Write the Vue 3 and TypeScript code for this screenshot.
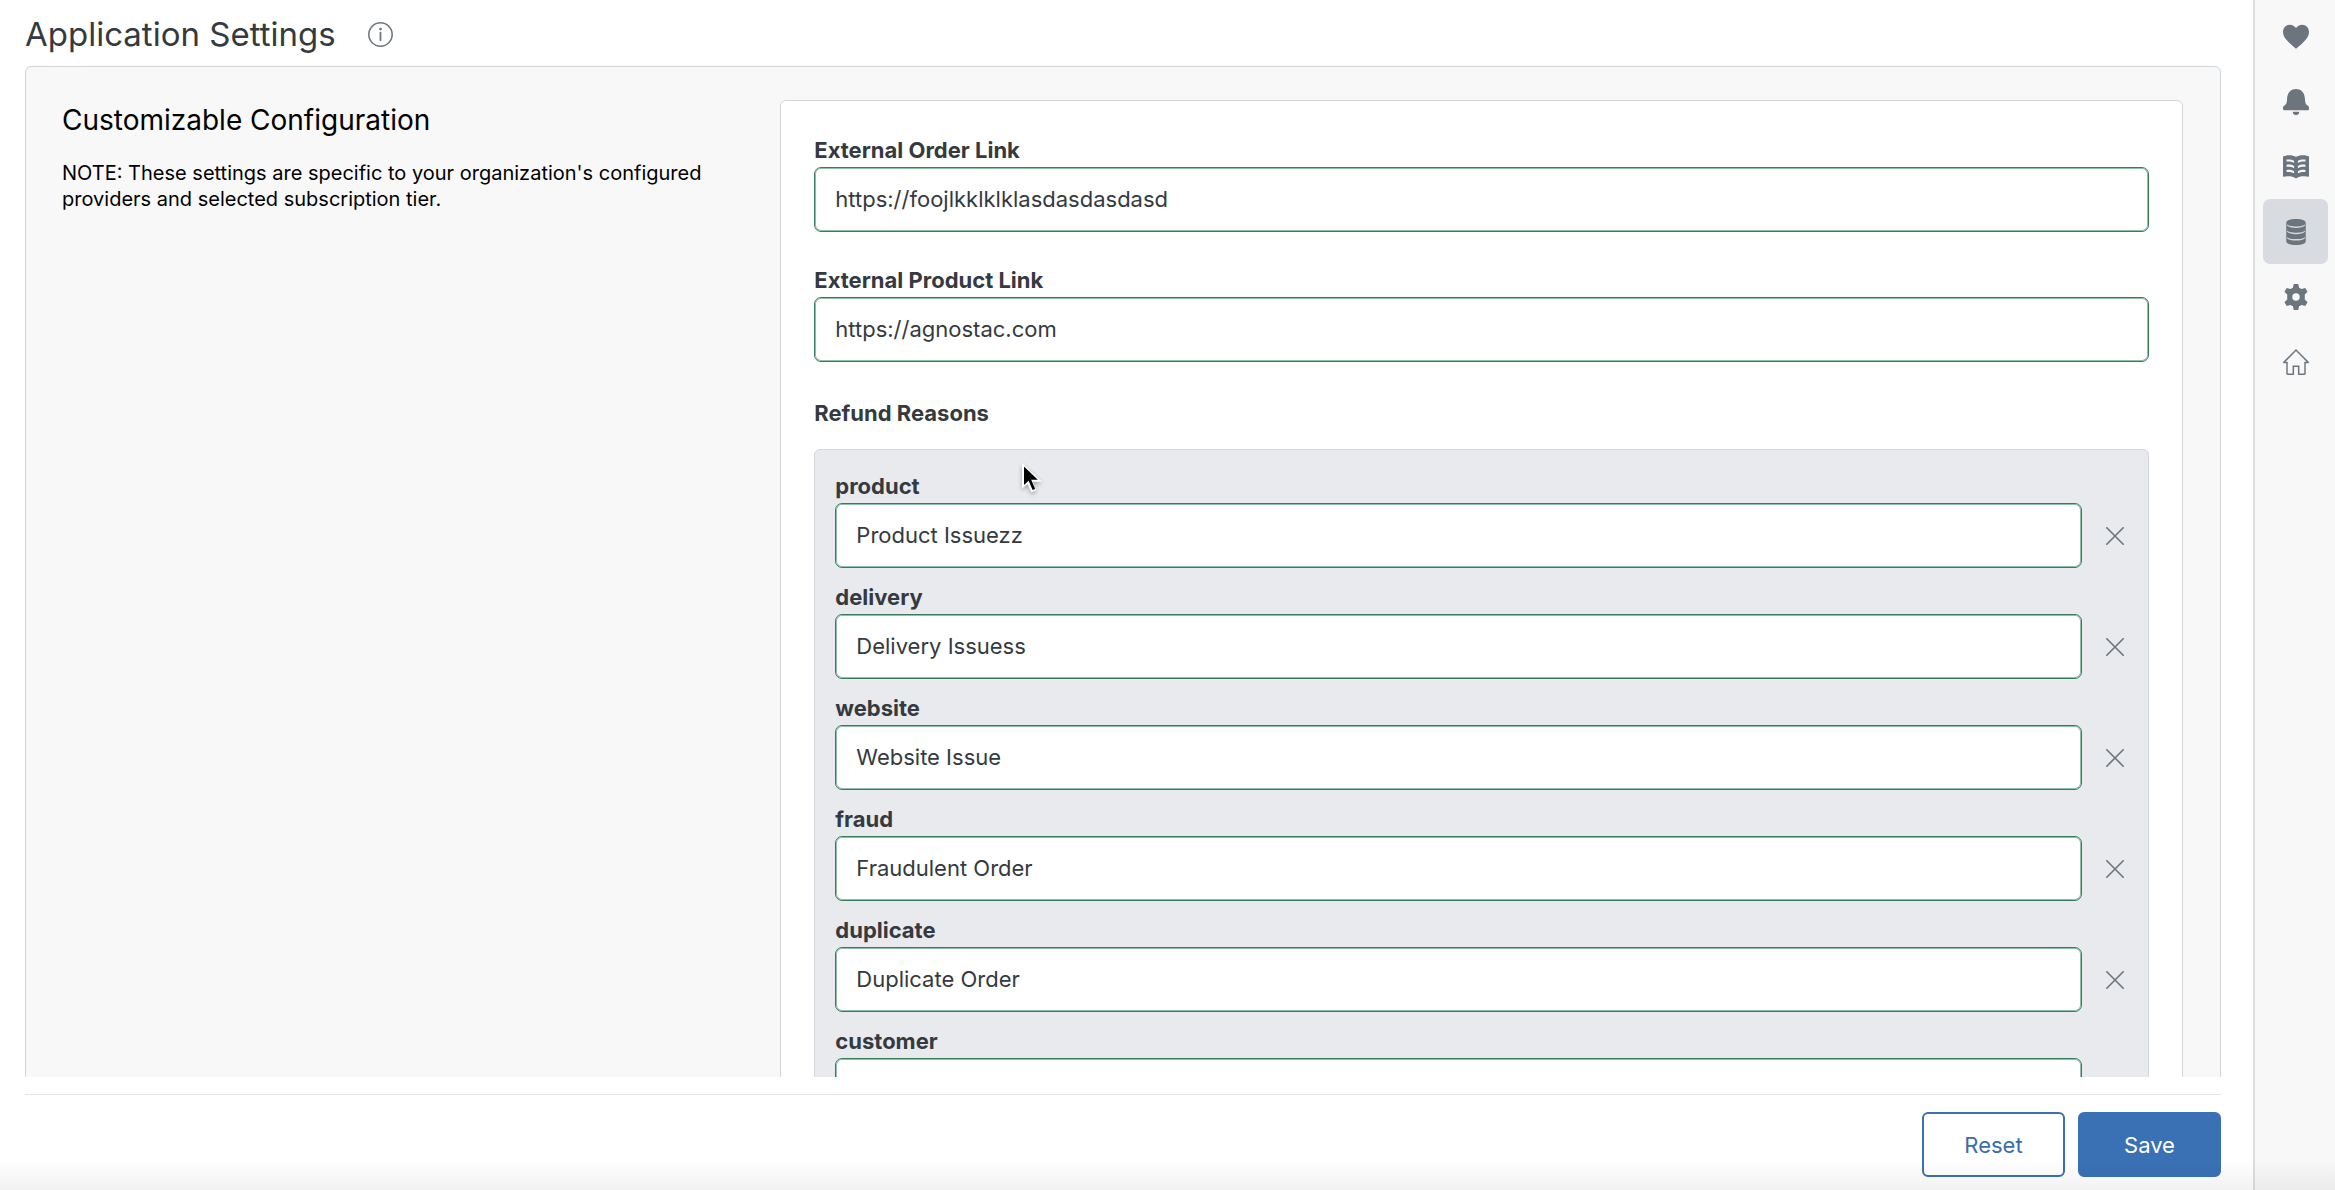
<script setup lang="ts">
import { reactive } from 'vue'

interface Field {
  key: string
  label: string
  value: string
}

interface NavItem {
  name: string
  paths: string[]
  active?: boolean
}

const links = reactive<Field[]>([
  { key: 'order-link', label: 'External Order Link', value: 'https://foojlkklklklasdasdasdasd' },
  { key: 'product-link', label: 'External Product Link', value: 'https://agnostac.com' },
])

const reasons = reactive<Field[]>([
  { key: 'product', label: 'product', value: 'Product Issuezz' },
  { key: 'delivery', label: 'delivery', value: 'Delivery Issuess' },
  { key: 'website', label: 'website', value: 'Website Issue' },
  { key: 'fraud', label: 'fraud', value: 'Fraudulent Order' },
  { key: 'duplicate', label: 'duplicate', value: 'Duplicate Order' },
  { key: 'customer', label: 'customer', value: '' },
])

const nav: NavItem[] = [
  {
    name: 'Favorites',
    paths: ['M8 15.200C3.500 11.500 0 8.500 0 4.900 0 2.200 1.900.4 4.200.4c1.600 0 3 .8 3.800 2C8.800 1.200 10.200.4 11.800.4 14.100.4 16 2.200 16 4.900c0 3.600-3.500 6.600-8 10.300z'],
  },
  {
    name: 'Notifications',
    paths: [
      'M8 0C4.3 0 2.6 3 2.5 6.2c-.1 2-.3 3.2-1.6 4C.2 10.600 0 11 0 11.700V12.300c0 .5.3.7.7.7h14.600c.4 0 .7-.2.7-.7V11.700c0-.7-.2-1.100-.9-1.500-1.300-.8-1.500-2-1.600-4C13.400 3 11.700 0 8 0z',
      'M6 14h4a2 2 0 0 1-4 0z',
    ],
  },
  {
    name: 'Catalog',
    paths: [
      'M0 1.500C2.500.4 5.800.4 8 1.700 10.200.4 13.500.4 16 1.500V14c-2.500-.5-6-.5-8 1-2-1.500-5.500-1.500-8-1zM2.200 3.400v1.300c1.500-.2 3-.1 4.600.8V4.200C5.300 3.300 3.800 3.200 2.200 3.400zm0 3.200v1.300c1.500-.2 3-.1 4.600.8V7.400C5.300 6.500 3.800 6.400 2.200 6.600zm0 3.200v1.300c1.500-.2 3-.1 4.600.8v-1.300C5.300 9.700 3.800 9.600 2.200 9.800zM13.800 3.400c-1.600-.2-3.100-.1-4.600.8v1.300c1.600-.9 3.100-1 4.600-.8zm0 3.200c-1.600-.2-3.100-.1-4.600.8v1.300c1.600-.9 3.100-1 4.600-.8zm0 3.200c-1.600-.2-3.100-.1-4.600.8v1.300c1.600-.9 3.100-1 4.600-.8z',
    ],
  },
  {
    name: 'Data',
    active: true,
    paths: [
      'M2 2.300C2 .9 4.500 0 8 0s6 .9 6 2.300v11.400C14 15.100 11.500 16 8 16s-6-.9-6-2.300zM2.500 3.200V4C4 6 12 6 13.500 4v-.8C12.200 5 3.800 5 2.500 3.200zm0 3.900v.8c1.500 2 9.500 2 11 0v-.8c-1.300 1.800-9.700 1.800-11 0zm0 3.900v.8c1.500 2 9.500 2 11 0V11c-1.300 1.800-9.700 1.800-11 0z',
    ],
  },
  {
    name: 'Settings',
    paths: [
      'M6.600 0h2.800l.5 2.300 1.500.8 2.300-.7 1.400 2.400-1.700 1.700v3l1.700 1.700-1.400 2.400-2.300-.7-1.500.8L9.400 16H6.600l-.5-2.300-1.500-.8-2.300.7L.9 11.200l1.700-1.700v-3L.9 4.800l1.400-2.400 2.300.7 1.500-.8zM8 5.700a2.300 2.300 0 1 0 0 4.600 2.300 2.300 0 0 0 0-4.600z',
    ],
  },
  {
    name: 'Home',
    paths: [
      'M8 0L16 8 15.700 8.800H14V15a1 1 0 0 1-1 1H9.200V11H6.800v5H3a1 1 0 0 1-1-1V8.800H.3L0 8zM8 1.300L1.500 7.900H2.900V15.100H5.900V10.100h4.200v5h3V7.900h1.400z',
    ],
  },
]

function clearReason(reason: Field) {
  reason.value = ''
}
</script>

<template>
  <div class="app">
    <main class="main">
      <header class="title-bar">
        <h1>Application Settings</h1>
        <button class="info" type="button" aria-label="About these settings">
          <svg viewBox="0 0 24 24" fill="none" stroke="currentColor">
            <circle cx="12" cy="12" r="11.200" stroke-width="1.500" />
            <path d="M12 10.300v7.200" stroke-width="1.700" stroke-linecap="round" />
            <circle cx="12" cy="6.800" r="1.300" fill="currentColor" stroke="none" />
          </svg>
        </button>
      </header>

      <div class="scroller">
        <section class="panel">
          <div class="intro">
            <h2>Customizable Configuration</h2>
            <p>NOTE: These settings are specific to your organization's configured providers and selected subscription tier.</p>
          </div>

          <form id="settings" class="card" @submit.prevent>
            <div v-for="link in links" :key="link.key" class="field">
              <label :for="link.key">{{ link.label }}</label>
              <input :id="link.key" v-model="link.value" type="text" />
            </div>

            <h3>Refund Reasons</h3>
            <div class="group">
              <div v-for="reason in reasons" :key="reason.key" class="reason">
                <label :for="reason.key">{{ reason.label }}</label>
                <div class="row">
                  <input :id="reason.key" v-model="reason.value" type="text" />
                  <button class="clear" type="button" :aria-label="'Clear ' + reason.label" @click="clearReason(reason)">
                    <svg viewBox="0 0 18 18" fill="none" stroke="currentColor" stroke-width="1.600" stroke-linecap="round">
                      <path d="M.8.8l16.400 16.400M17.200.8L.8 17.200" />
                    </svg>
                  </button>
                </div>
              </div>
              <svg class="pointer" viewBox="0 0 20 30" aria-hidden="true">
                <path d="M0 0v25.500l5.500-4.500 3.700 8.300 5.200-2-3.700-8.500H20z" fill="#fff" />
                <path d="M2 3.500v18.500l4.600-4.300 4 9.400 2.600-1-4-9.300h6.600z" fill="#000" />
              </svg>
            </div>
          </form>
        </section>
      </div>

      <footer class="actions">
        <button class="btn" type="reset" form="settings">Reset</button>
        <button class="btn primary" type="submit" form="settings">Save</button>
      </footer>
    </main>

    <nav class="rail">
      <button v-for="item in nav" :key="item.name" type="button" :class="{ active: item.active }" :aria-label="item.name">
        <svg viewBox="0 0 16 16" fill="currentColor" fill-rule="evenodd">
          <path v-for="d in item.paths" :key="d" :d="d" />
        </svg>
      </button>
    </nav>
    <div class="shade"></div>
  </div>
</template>

<style>
body {
  margin: 0;
}
</style>

<style scoped>
* {
  box-sizing: border-box;
}

.app {
  position: relative;
  display: flex;
  height: 100vh;
  overflow: hidden;
  background: #fff;
  color: #343a40;
  font: 22px/34px Inter, "Liberation Sans", sans-serif;
}

h1,
h2,
h3,
p {
  margin: 0;
  font-weight: 400;
}

button,
input {
  font: inherit;
  color: inherit;
}

button {
  display: flex;
  align-items: center;
  justify-content: center;
  padding: 0;
  border: 0;
  background: none;
}

.main {
  flex: 1;
  min-width: 0;
  display: flex;
  flex-direction: column;
  padding: 0 32px 0 25px;
}

.title-bar {
  flex: none;
  display: flex;
  align-items: center;
  gap: 32px;
  height: 66px;
  padding-top: 2px;
}

h1 {
  font-size: 33px;
  line-height: 64px;
}

.info {
  color: #6c757d;
}

.info svg {
  width: 25px;
  height: 25px;
}

.scroller {
  flex: 1;
  min-height: 0;
  overflow: auto;
  scrollbar-width: none;
}

.panel {
  display: grid;
  grid-template-columns: 1fr 2fr;
  gap: 17px;
  padding: 33px 37px 33px 36px;
  border: 1px solid #d0d5da;
  border-radius: 6px;
  background: #f8f8f8;
}

.intro {
  color: #000;
}

h2 {
  font-size: 28px;
  line-height: 40px;
}

.intro p {
  margin-top: 20px;
  font-size: 20px;
  line-height: 26px;
}

.card {
  padding: 32px 33px;
  border: 1px solid #d0d5da;
  border-radius: 6px;
  background: #fff;
}

label,
h3 {
  display: block;
  font-size: 22px;
  font-weight: 700;
  line-height: 34px;
}

input {
  display: block;
  width: 100%;
  height: 65px;
  padding: 0 20px 1px;
  border: 1px solid #347f5a;
  border-radius: 7px;
  outline: 0;
  background: #fff;
  box-shadow: inset 0 0 0 1px #8fbfa6;
}

.field {
  margin-bottom: 31px;
}

h3 {
  margin: 34px 0 19px;
}

.group {
  position: relative;
  padding: 19px 0 20px 20px;
  border: 1px solid #d3d7db;
  border-radius: 6px;
  background: #e9eaee;
}

.reason + .reason {
  margin-top: 12px;
}

.row {
  display: flex;
}

.row input {
  flex: 1;
  min-width: 0;
}

.clear {
  flex: none;
  width: 66px;
  color: #6c757d;
}

.clear svg {
  width: 18px;
  height: 18px;
}

.pointer {
  position: absolute;
  top: 13px;
  left: 207px;
  width: 20px;
  height: 30px;
  filter: drop-shadow(0 2px 2px rgba(0, 0, 0, 0.3));
}

.actions {
  flex: none;
  display: flex;
  justify-content: flex-end;
  gap: 13px;
  margin-top: 17px;
  padding: 17px 0 13px;
  border-top: 1px solid #e4e5ec;
}

.btn {
  width: 143px;
  height: 65px;
  border: 2px solid #3a71b5;
  border-radius: 6px;
  color: #3a6cae;
}

.btn.primary {
  background: #3a71b5;
  color: #fff;
}

.rail {
  flex: none;
  display: flex;
  flex-direction: column;
  width: 82px;
  padding: 4px 7px 0 8px;
  border-left: 2px solid #dcdfe1;
  background: #f8f8f8;
  color: #6c757d;
}

.rail button {
  height: 65px;
  border-radius: 7px;
}

.rail .active {
  background: #d8dbdf;
}

.rail svg {
  width: 26px;
  height: 26px;
}

.shade {
  position: absolute;
  right: 0;
  bottom: 0;
  left: 0;
  height: 32px;
  background: linear-gradient(rgba(0, 0, 0, 0), rgba(0, 0, 0, 0.05));
  pointer-events: none;
}
</style>
